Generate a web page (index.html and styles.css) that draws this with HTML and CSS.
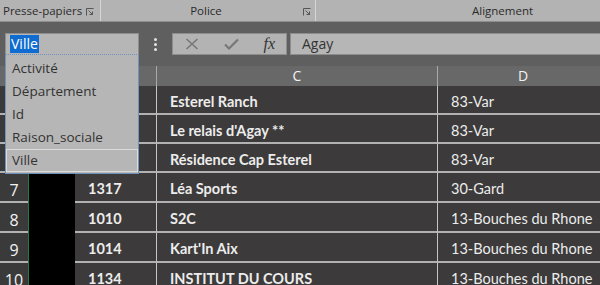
FILE: index.html
```html
<!DOCTYPE html>
<html lang="fr">
<head>
  <meta charset="UTF-8">
  <meta name="viewport" content="width=device-width, initial-scale=1.0">
  <title>Zone Nom - Ville</title>
  <link rel="stylesheet" href="styles.css">
</head>
<body>

  <!-- ruban : libellés des groupes -->
  <div class="ribbon">
    <div class="group group-clip">
      <span>Presse-papiers</span>
      <svg class="launcher" width="8" height="8" viewBox="0 0 8 8"><path d="M0.5 7.5V0.5H7.5" fill="none" stroke="#555" stroke-width="1"/><path d="M2.5 2.5L6.5 6.5M6.5 3.5V6.5H3.5" fill="none" stroke="#555" stroke-width="1"/></svg>
    </div>
    <div class="group group-font">
      <span class="label-center">Police</span>
      <svg class="launcher" width="8" height="8" viewBox="0 0 8 8"><path d="M0.5 7.5V0.5H7.5" fill="none" stroke="#555" stroke-width="1"/><path d="M2.5 2.5L6.5 6.5M6.5 3.5V6.5H3.5" fill="none" stroke="#555" stroke-width="1"/></svg>
    </div>
    <div class="group group-align">
      <span>Alignement</span>
    </div>
  </div>

  <!-- barre de formule -->
  <div class="formula-row">
    <div class="namebox-wrap">
      <div class="namebox"><span class="selected">Ville</span></div>

      <!-- liste déroulante des noms -->
      <ul class="name-list">
        <li>Activité</li>
        <li>Département</li>
        <li>Id</li>
        <li>Raison_sociale</li>
        <li class="current">Ville</li>
      </ul>
    </div>
    <div class="grip"><i></i><i></i><i></i></div>
    <div class="fx-tools">
      <svg width="14" height="12" viewBox="0 0 14 12"><path d="M1.5 1L12.5 11M12.5 1L1.5 11" stroke="#777" stroke-width="1.6" fill="none"/></svg>
      <svg width="15" height="12" viewBox="0 0 15 12"><path d="M1 6.5L5 10.5L14 1.5" stroke="#777" stroke-width="2.2" fill="none"/></svg>
      <span class="fx">fx</span>
    </div>
    <div class="formula-input">Agay</div>
  </div>

  <!-- feuille (les cellules sous la liste restent vides) -->
  <div class="sheet">
    <div class="hd corner"></div>
    <div class="hd hd-black"></div>
    <div class="hd"></div>
    <div class="hd">C</div>
    <div class="hd hd-last">D</div>

    <div class="rh"></div><div class="blk"></div>
    <div class="cell num"></div><div class="cell strong">Esterel Ranch</div><div class="cell last">83-Var</div>

    <div class="rh"></div><div class="blk"></div>
    <div class="cell num"></div><div class="cell strong">Le relais d'Agay **</div><div class="cell last">83-Var</div>

    <div class="rh"></div><div class="blk"></div>
    <div class="cell num"></div><div class="cell strong">Résidence Cap Esterel</div><div class="cell last">83-Var</div>

    <div class="rh">7</div><div class="blk"></div>
    <div class="cell num">1317</div><div class="cell strong">Léa Sports</div><div class="cell last">30-Gard</div>

    <div class="rh">8</div><div class="blk"></div>
    <div class="cell num">1010</div><div class="cell strong">S2C</div><div class="cell last">13-Bouches du Rhone</div>

    <div class="rh">9</div><div class="blk"></div>
    <div class="cell num">1014</div><div class="cell strong">Kart'In Aix</div><div class="cell last">13-Bouches du Rhone</div>

    <div class="rh">10</div><div class="blk"></div>
    <div class="cell num">1134</div><div class="cell strong">INSTITUT DU COURS</div><div class="cell last">13-Bouches du Rhone</div>
  </div>

</body>
</html>
```

FILE: styles.css
```css
html, body {
  margin: 0;
  padding: 0;
  overflow: hidden;
}

body {
  width: 600px;
  height: 285px;
  background-color: #5f5f5f;
  font-family: "Open Sans", "Noto Sans", sans-serif;
}

/* ruban */
.ribbon {
  display: flex;
  height: 21px;
  background-color: #b3b3b3;
  border-bottom: 1px solid #8e8e8e;
  font-size: 11.5px;
  color: #2b2b2b;
}

.group {
  display: flex;
  align-items: center;
  box-sizing: border-box;
  border-right: 1px solid #d6d6d6;
}

.group-clip {
  width: 101px;
  padding-left: 3px;
  justify-content: space-between;
  padding-right: 6px;
}

.group-font {
  width: 215px;
  padding-right: 4px;
}

.label-center {
  flex: 1;
  text-align: center;
  padding-left: 8px;
}

.group-align {
  flex: 1;
  border-right: none;
  padding-left: 156px;
}

.launcher {
  display: block;
  margin-top: 2px;
}

/* barre de formule */
.formula-row {
  display: flex;
  height: 22px;
  margin-top: 11px;
  padding-left: 5px;
}

.namebox-wrap {
  position: relative;
  width: 134px;
}

.namebox {
  height: 22px;
  box-sizing: border-box;
  background-color: #b6b6b6;
  border: 1px solid #8d8d8d;
  border-bottom: 1px dotted #6f93bd;
  padding: 1px 0 0 4px;
  font-size: 14px;
  line-height: 18px;
}

.selected {
  display: inline-block;
  background-color: #0f6cd0;
  color: #fff;
  padding: 0 1px;
}

.name-list {
  position: absolute;
  top: 100%;
  left: 0;
  right: 0;
  margin: 0;
  padding: 2px 0 1px;
  list-style: none;
  background-color: #b6b6b6;
  border: 1px solid #6f93bd;
  border-top: none;
  font-size: 13.5px;
  color: #333;
  z-index: 2;
}

.name-list li {
  height: 23px;
  line-height: 23px;
  padding-left: 6px;
  box-sizing: border-box;
}

.name-list li.current {
  border: 1px solid #dcdcdc;
  padding-left: 5px;
  line-height: 21px;
}

.grip {
  width: 33px;
  display: flex;
  flex-direction: column;
  align-items: center;
  justify-content: center;
  gap: 2px;
}

.grip i {
  width: 3px;
  height: 3px;
  border-radius: 50%;
  background-color: #e4e4e4;
}

.fx-tools {
  width: 115px;
  box-sizing: border-box;
  display: flex;
  align-items: center;
  justify-content: space-between;
  padding: 0 11px 0 12px;
  background-color: #b3b3b3;
  border: 1px solid #8d8d8d;
}

.fx {
  font-family: "Liberation Serif", serif;
  font-style: italic;
  font-size: 16px;
  color: #333;
}

.formula-input {
  flex: 1;
  margin-left: 3px;
  box-sizing: border-box;
  background-color: #b6b6b6;
  border: 1px solid #8d8d8d;
  border-right: none;
  padding-left: 11px;
  font-size: 14px;
  line-height: 20px;
  color: #333;
}

/* feuille */
.sheet {
  display: grid;
  grid-template-columns: 28px 47px 82px 281px 1fr;
  grid-template-rows: 20px 29px 29px 29px 30px 30px 30px 30px;
  margin-top: 11px;
  font-family: "Lato", "Open Sans", sans-serif;
}

.hd {
  background-color: #686868;
  border-right: 1px solid #a9a9a9;
  color: #f2f2f2;
  font-family: "Open Sans", sans-serif;
  font-size: 14px;
  line-height: 20px;
  text-align: center;
}

.hd-last {
  padding-left: 8px;
  border-right: none;
}

.corner {
  border-right: none;
}

.rh {
  background-color: #3b3a3a;
  border-bottom: 2px solid #b2b2b2;
  box-sizing: border-box;
  color: #f2f2f2;
  font-family: "Open Sans", sans-serif;
  font-size: 16px;
  display: flex;
  align-items: flex-end;
  justify-content: center;
  padding-bottom: 0;
}

.blk {
  background-color: #000;
  border-left: 1px solid #1f7a45;
}

.cell {
  background-color: #3c3a3a;
  border-bottom: 2px solid #b2b2b2;
  border-right: 1px solid #c4c4c4;
  box-sizing: border-box;
  color: #ececec;
  font-size: 14.5px;
  display: flex;
  align-items: center;
  padding: 3px 0 0 13px;
  white-space: nowrap;
  overflow: hidden;
}

.num,
.strong {
  font-weight: bold;
}

.last {
  border-right: none;
  font-size: 14.5px;
}
```
